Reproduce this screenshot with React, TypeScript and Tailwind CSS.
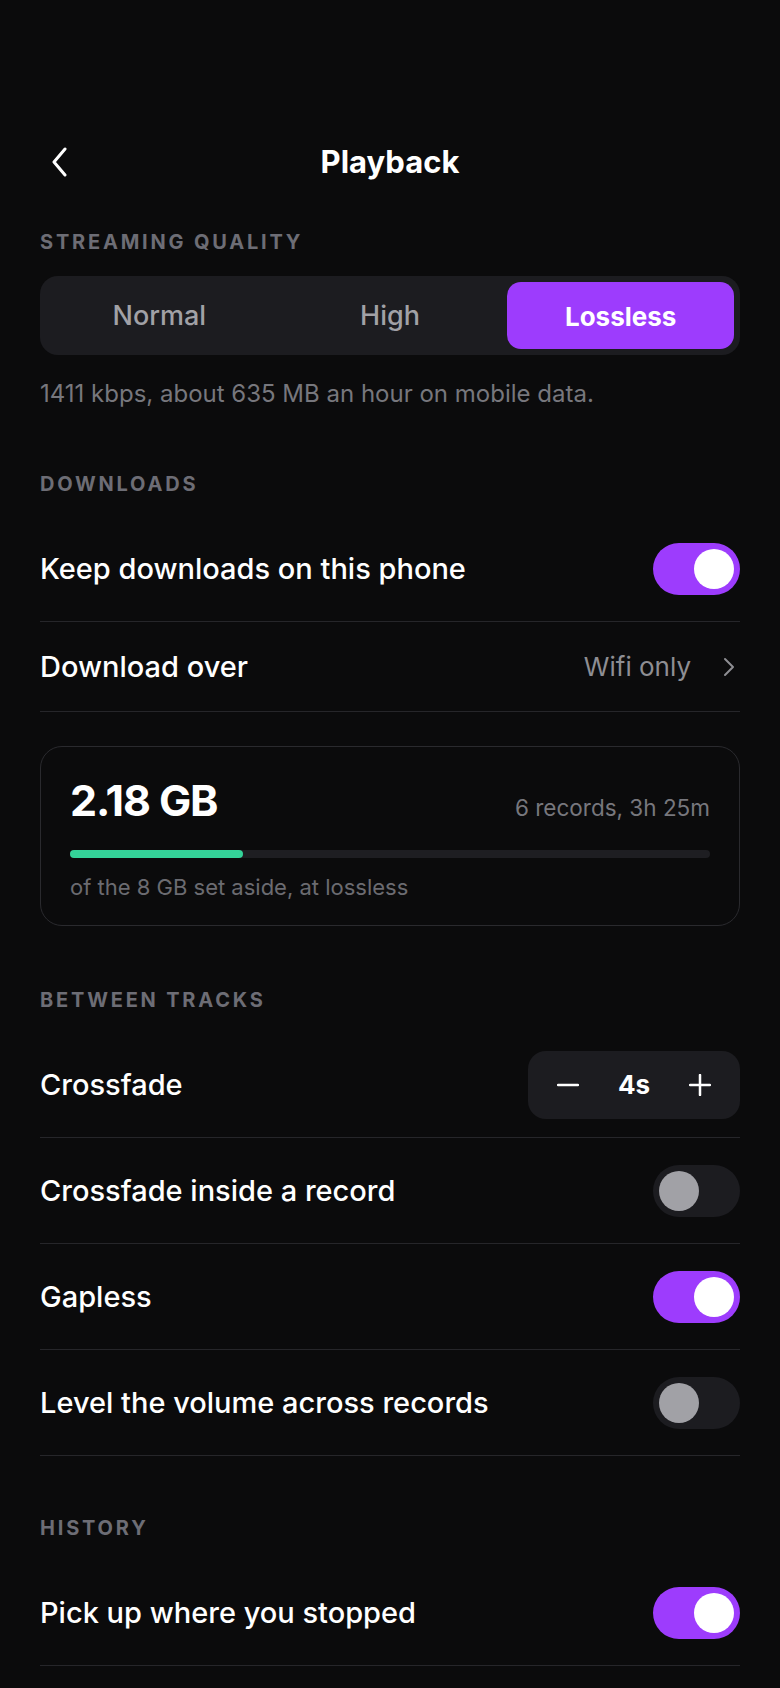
import React from "react";

function Toggle({ on }: { on: boolean }) {
  return (
    <div
      className={
        on
          ? "w-[87px] h-[52px] rounded-full bg-[#9d3cfd] flex items-center justify-end px-[6px]"
          : "w-[87px] h-[52px] rounded-full bg-[#1c1c20] flex items-center justify-start px-[6px]"
      }
    >
      <div
        className={
          on
            ? "w-[40px] h-[40px] rounded-full bg-white"
            : "w-[40px] h-[40px] rounded-full bg-[#a1a1a6]"
        }
      />
    </div>
  );
}

function Label({ children, className }: { children: React.ReactNode; className?: string }) {
  return (
    <p
      className={
        "text-[20px] leading-5 font-bold tracking-[0.14em] uppercase text-[#6d6d75] " +
        (className || "")
      }
    >
      {children}
    </p>
  );
}

function ToggleRow({ title, on }: { title: string; on: boolean }) {
  return (
    <div className="h-[106px] border-b border-[#26262a] flex justify-between items-center">
      <p className="text-[29px] font-medium text-white">{title}</p>
      <Toggle on={on} />
    </div>
  );
}

export default function App() {
  return (
    <div className="min-h-[1688px] w-full bg-[#0b0b0c] px-10 font-['Inter',sans-serif] text-white">
      <div className="pt-[132px] h-[192px] relative flex justify-center items-center">
        <svg
          className="absolute left-[10px] top-[147px]"
          width="20"
          height="30"
          viewBox="0 0 20 30"
          fill="none"
        >
          <polyline
            points="15,2 4,15 15,28"
            stroke="white"
            strokeWidth="3"
            strokeLinecap="round"
            strokeLinejoin="round"
          />
        </svg>
        <p className="text-[31px] font-bold">Playback</p>
      </div>

      <Label className="mt-10">Streaming quality</Label>
      <div className="mt-6 h-[79px] rounded-[18px] bg-[#1c1c20] p-[6px] flex gap-[4px]">
        <div className="flex-1 flex justify-center items-center pt-[2px] text-[27px] font-medium text-[#a1a1a6]">
          Normal
        </div>
        <div className="flex-1 flex justify-center items-center pt-[2px] text-[27px] font-medium text-[#a1a1a6]">
          High
        </div>
        <div className="flex-1 flex justify-center items-center pt-[2px] rounded-[14px] bg-[#9d3cfd] text-[26px] font-bold text-white">
          Lossless
        </div>
      </div>
      <p className="mt-6 text-[24px] leading-[30px] text-[#77777d]">
        1411 kbps, about 635 MB an hour on mobile data.
      </p>

      <Label className="mt-[65px]">Downloads</Label>
      <div className="mt-[22px]">
        <ToggleRow title="Keep downloads on this phone" on={true} />
        <div className="h-[90px] border-b border-[#26262a] flex justify-between items-center">
          <p className="text-[29px] font-medium text-white">Download over</p>
          <div className="flex items-center gap-[32px] text-[#8e8e93]">
            <p className="text-[26px]">Wifi only</p>
            <svg width="12" height="20" viewBox="0 0 12 20" fill="none" className="mr-[5px]">
              <polyline
                points="2,2 10,10 2,18"
                stroke="#8e8e93"
                strokeWidth="2"
                strokeLinecap="round"
                strokeLinejoin="round"
              />
            </svg>
          </div>
        </div>
      </div>

      <div className="mt-[34px] h-[180px] rounded-[22px] border border-[#2a2a2e] px-[29px] pt-[29px]">
        <div className="flex justify-between items-baseline">
          <p className="text-[43px] leading-[48px] font-bold tracking-tight">2.18 GB</p>
          <p className="text-[22.5px] text-[#77777d]">6 records, 3h 25m</p>
        </div>
        <div className="mt-[25px] h-2 w-full rounded-full bg-[#1e1e22]">
          <div className="h-2 w-[27%] rounded-full bg-[#34d399]" />
        </div>
        <p className="mt-4 text-[22px] leading-[26px] text-[#6b6b71]">
          of the 8 GB set aside, at lossless
        </p>
      </div>

      <Label className="mt-16">Between tracks</Label>
      <div className="mt-[22px]">
        <div className="h-[106px] border-b border-[#26262a] flex justify-between items-center">
          <p className="text-[29px] font-medium text-white">Crossfade</p>
          <div className="w-[212px] h-[68px] rounded-[18px] bg-[#1c1c20] flex justify-between items-center px-[29px]">
            <svg width="22" height="22" viewBox="0 0 22 22" fill="none">
              <line x1="1" y1="11" x2="21" y2="11" stroke="white" strokeWidth="2.5" strokeLinecap="round" />
            </svg>
            <p className="text-[26px] font-bold">4s</p>
            <svg width="22" height="22" viewBox="0 0 22 22" fill="none">
              <line x1="1" y1="11" x2="21" y2="11" stroke="white" strokeWidth="2.5" strokeLinecap="round" />
              <line x1="11" y1="1" x2="11" y2="21" stroke="white" strokeWidth="2.5" strokeLinecap="round" />
            </svg>
          </div>
        </div>
        <ToggleRow title="Crossfade inside a record" on={false} />
        <ToggleRow title="Gapless" on={true} />
        <ToggleRow title="Level the volume across records" on={false} />
      </div>

      <Label className="mt-[62px]">History</Label>
      <div className="mt-[22px]">
        <ToggleRow title="Pick up where you stopped" on={true} />
      </div>
    </div>
  );
}
